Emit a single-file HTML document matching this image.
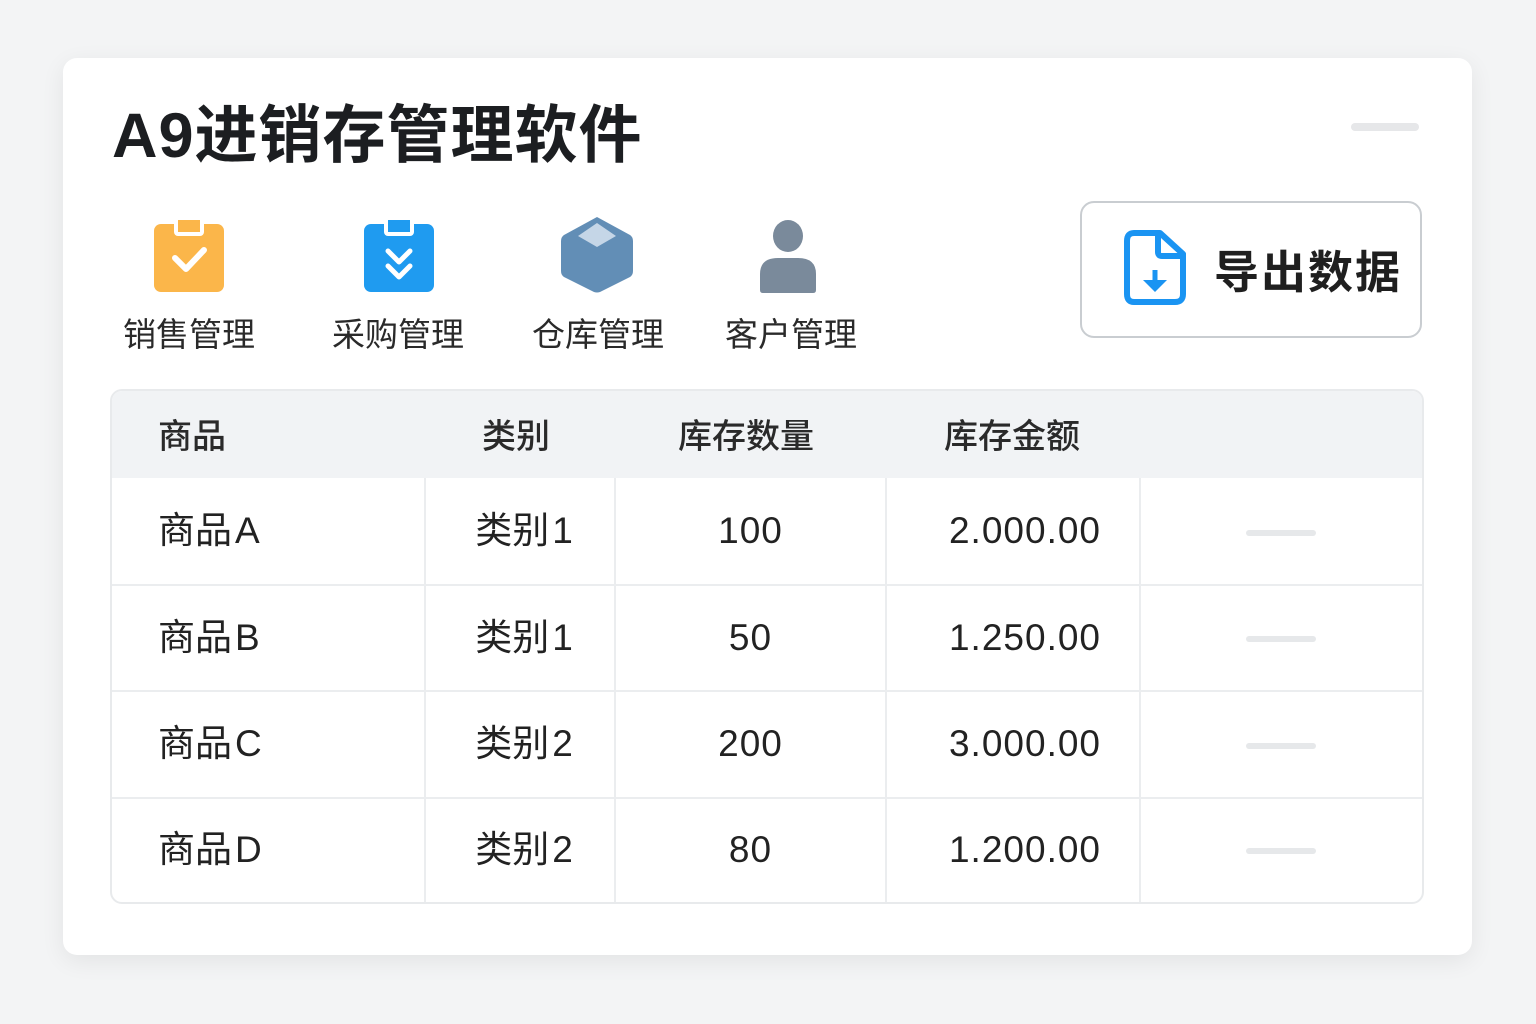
<!DOCTYPE html>
<html><head><meta charset="utf-8"><style>
*{margin:0;padding:0;box-sizing:border-box}
body{width:1536px;height:1024px;background:#f3f4f5;font-family:"Liberation Sans","Noto Sans CJK SC",sans-serif;position:relative;overflow:hidden;color:#222}
.card{position:absolute;left:63px;top:58px;width:1409px;height:897px;background:#fff;border-radius:14px;box-shadow:0 6px 24px rgba(0,0,0,.07)}
.abs{position:absolute}
.title{left:112px;top:85px;font-size:63px;font-weight:bold;color:#1c1e21;letter-spacing:1px;white-space:nowrap}
.lbl{font-size:33px;color:#2a2a2a;top:308px;white-space:nowrap}
.btn{left:1080px;top:201px;width:342px;height:137px;border:2px solid #c9cdd1;border-radius:14px;background:#fff}
.btxt{left:1214px;top:236px;font-size:45px;font-weight:bold;color:#1f1f1f;letter-spacing:2px}
.tbl{left:110px;top:389px;width:1314px;height:515px;border:2px solid #e8eaec;border-radius:12px;overflow:hidden;background:#fff}
.hdr{left:0;top:0;width:1314px;height:87px;background:#f1f3f5}
.ht{font-size:34px;font-weight:500;color:#2a2a2a;top:18px;white-space:nowrap}
.hl{height:2px;background:#ebedef;left:0;width:1314px}
.vl{width:2px;background:#ebedef;top:87px;height:428px}
.c{font-size:37px;color:#222;white-space:nowrap;text-align:center;height:50px;line-height:50px}
.c i{font-style:normal;margin-left:3px}
.n{letter-spacing:1px}
.dash{width:70px;height:6px;background:#e6e8ea;border-radius:3px;left:1134px}
</style></head><body>
<div class="card"></div>
<div class="abs title">A9进销存管理软件</div>
<div class="abs" style="left:1351px;top:123px;width:68px;height:8px;background:#e6e7e9;border-radius:4px"></div>

<svg class="abs" style="left:150px;top:214px" width="80" height="82" viewBox="0 0 80 82">
<rect x="4" y="10" width="70" height="68" rx="7" fill="#fbb64a"/>
<rect x="26" y="4" width="26" height="16" rx="2" fill="#fbb64a" stroke="#fff" stroke-width="4"/>
<path d="M25 44 L36 55 L54 36" stroke="#fff" stroke-width="6" fill="none" stroke-linecap="round" stroke-linejoin="round"/>
</svg>
<svg class="abs" style="left:360px;top:214px" width="80" height="82" viewBox="0 0 80 82">
<rect x="4" y="10" width="70" height="68" rx="7" fill="#1f9bf0"/>
<rect x="26" y="4" width="26" height="16" rx="2" fill="#1f9bf0" stroke="#fff" stroke-width="4"/>
<path d="M28 37 L39 48 L50 37 M28 52 L39 63 L50 52" stroke="#fff" stroke-width="5" fill="none" stroke-linecap="round" stroke-linejoin="round"/>
</svg>
<svg class="abs" style="left:558px;top:215px" width="78" height="80" viewBox="0 0 78 80">
<path d="M39 2 L72 20 Q75 22 75 26 L75 56 Q75 60 72 62 L42 77 Q39 78 36 77 L6 62 Q3 60 3 56 L3 26 Q3 22 6 20 Z" fill="#628eb6"/>
<path d="M39 8 L58 21 L39 32 L20 21 Z" fill="#c5d6e7"/>
</svg>
<svg class="abs" style="left:758px;top:218px" width="62" height="78" viewBox="0 0 62 78">
<ellipse cx="30" cy="18" rx="15" ry="16" fill="#7a8a9b"/>
<path d="M2 72 L2 56 Q2 40 20 40 L40 40 Q58 40 58 56 L58 72 Q58 75 55 75 L5 75 Q2 75 2 72Z" fill="#7a8a9b"/>
</svg>
<div class="abs lbl" style="left:123px">销售管理</div>
<div class="abs lbl" style="left:332px">采购管理</div>
<div class="abs lbl" style="left:532px">仓库管理</div>
<div class="abs lbl" style="left:725px">客户管理</div>

<div class="abs btn"></div>
<svg class="abs" style="left:1124px;top:230px" width="64" height="76" viewBox="0 0 64 76">
<path d="M10 3 L36 3 L59 24 L59 64 Q59 72 51 72 L10 72 Q3 72 3 64 L3 11 Q3 3 10 3Z" fill="none" stroke="#1a94f2" stroke-width="6" stroke-linejoin="round"/>
<path d="M34 4 L34 22 Q34 26 38 26 L58 26" fill="none" stroke="#1a94f2" stroke-width="6"/>
<path d="M31 40 L31 52" stroke="#1a94f2" stroke-width="5"/>
<path d="M19 50 L43 50 L31 62Z" fill="#1a94f2"/>
</svg>
<div class="abs btxt">导出数据</div>

<div class="abs tbl">
<div class="abs hdr"></div>
<div class="abs ht" style="left:46px">商品</div>
<div class="abs ht" style="left:370px">类别</div>
<div class="abs ht" style="left:566px">库存数量</div>
<div class="abs ht" style="left:832px">库存金额</div>
<div class="abs hl" style="top:193px"></div>
<div class="abs hl" style="top:299px"></div>
<div class="abs hl" style="top:406px"></div>
<div class="abs vl" style="left:312px"></div>
<div class="abs vl" style="left:502px"></div>
<div class="abs vl" style="left:773px"></div>
<div class="abs vl" style="left:1027px"></div>

<div class="abs c" style="left:46px;top:115px">商品<i>A</i></div>
<div class="abs c" style="left:318px;width:188px;top:115px">类别<i>1</i></div>
<div class="abs c n" style="left:504px;width:269px;top:115px">100</div>
<div class="abs c n" style="left:783px;width:260px;top:115px">2.000.00</div>
<div class="abs dash" style="top:139px"></div>

<div class="abs c" style="left:46px;top:222px">商品<i>B</i></div>
<div class="abs c" style="left:318px;width:188px;top:222px">类别<i>1</i></div>
<div class="abs c n" style="left:504px;width:269px;top:222px">50</div>
<div class="abs c n" style="left:783px;width:260px;top:222px">1.250.00</div>
<div class="abs dash" style="top:245px"></div>

<div class="abs c" style="left:46px;top:328px">商品<i>C</i></div>
<div class="abs c" style="left:318px;width:188px;top:328px">类别<i>2</i></div>
<div class="abs c n" style="left:504px;width:269px;top:328px">200</div>
<div class="abs c n" style="left:783px;width:260px;top:328px">3.000.00</div>
<div class="abs dash" style="top:352px"></div>

<div class="abs c" style="left:46px;top:434px">商品<i>D</i></div>
<div class="abs c" style="left:318px;width:188px;top:434px">类别<i>2</i></div>
<div class="abs c n" style="left:504px;width:269px;top:434px">80</div>
<div class="abs c n" style="left:783px;width:260px;top:434px">1.200.00</div>
<div class="abs dash" style="top:457px"></div>
</div>
</body></html>
